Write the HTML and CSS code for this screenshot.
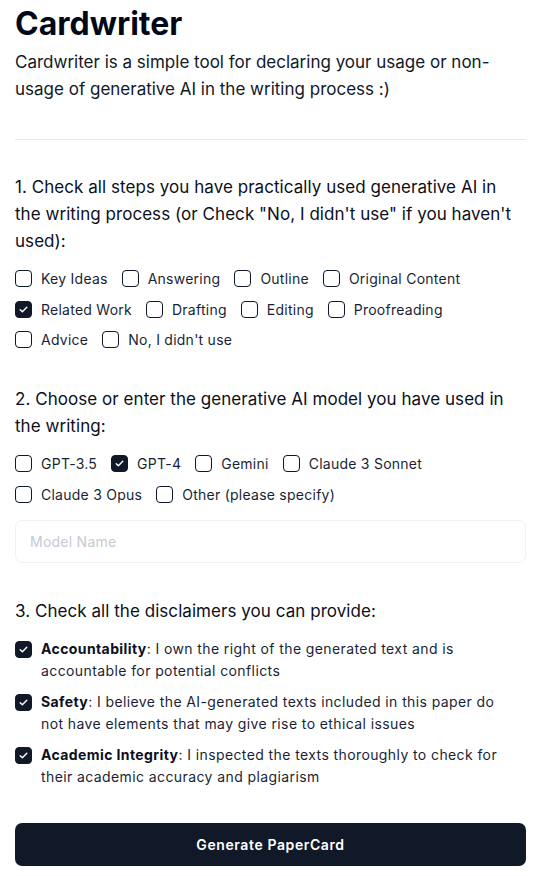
FILE: index.html
```html
<!DOCTYPE html>
<html lang="en">
<head>
<meta charset="utf-8">
<title>Cardwriter</title>
<link rel="stylesheet" href="styles.css">
</head>
<body>
<main class="page">
  <header class="intro">
    <h1 class="title">Cardwriter</h1>
    <p class="lead">Cardwriter is a simple tool for declaring your usage or non-usage of generative AI in the writing process :)</p>
  </header>
  <hr class="divider">

  <section class="section first">
    <h2 class="question">1. Check all steps you have practically used generative AI in the writing process (or Check "No, I didn't use" if you haven't used):</h2>
    <div class="options">
      <label class="opt"><span class="box"></span>Key Ideas</label>
      <label class="opt"><span class="box"></span>Answering</label>
      <label class="opt"><span class="box"></span>Outline</label>
      <label class="opt"><span class="box"></span>Original Content</label>
      <label class="opt"><span class="box checked"><svg viewBox="0 0 16 16"><path d="M4.5 8.2l2.3 2.3 4.7-4.9"/></svg></span>Related Work</label>
      <label class="opt"><span class="box"></span>Drafting</label>
      <label class="opt"><span class="box"></span>Editing</label>
      <label class="opt"><span class="box"></span>Proofreading</label>
      <label class="opt"><span class="box"></span>Advice</label>
      <label class="opt"><span class="box"></span>No, I didn't use</label>
    </div>
  </section>

  <section class="section">
    <h2 class="question">2. Choose or enter the generative AI model you have used in the writing:</h2>
    <div class="options">
      <label class="opt"><span class="box"></span>GPT-3.5</label>
      <label class="opt"><span class="box checked"><svg viewBox="0 0 16 16"><path d="M4.5 8.2l2.3 2.3 4.7-4.9"/></svg></span>GPT-4</label>
      <label class="opt"><span class="box"></span>Gemini</label>
      <label class="opt"><span class="box"></span>Claude 3 Sonnet</label>
      <label class="opt"><span class="box"></span>Claude 3 Opus</label>
      <label class="opt"><span class="box"></span>Other (please specify)</label>
    </div>
    <input class="field" type="text" placeholder="Model Name">
  </section>

  <section class="section last">
    <h2 class="question">3. Check all the disclaimers you can provide:</h2>
    <div class="disclaimers">
      <div class="disc"><span class="box checked"><svg viewBox="0 0 16 16"><path d="M4.5 8.2l2.3 2.3 4.7-4.9"/></svg></span><p><b>Accountability</b>: I own the right of the generated text and is accountable for potential conflicts</p></div>
      <div class="disc"><span class="box checked"><svg viewBox="0 0 16 16"><path d="M4.5 8.2l2.3 2.3 4.7-4.9"/></svg></span><p><b>Safety</b>: I believe the AI-generated texts included in this paper do not have elements that may give rise to ethical issues</p></div>
      <div class="disc"><span class="box checked"><svg viewBox="0 0 16 16"><path d="M4.5 8.2l2.3 2.3 4.7-4.9"/></svg></span><p><b>Academic Integrity</b>: I inspected the texts thoroughly to check for their academic accuracy and plagiarism</p></div>
    </div>
  </section>

  <button class="generate" type="button">Generate PaperCard</button>
</main>
</body>
</html>
```

FILE: styles.css
```css
* { box-sizing: border-box; }
html, body { margin: 0; padding: 0; background: #fff; }
body {
  font-family: Inter, "Noto Sans", sans-serif;
  color: #0f172a;
}
.page {
  padding: 6px 16px 10px 15px;
}
.title {
  margin: 0;
  font-size: 32px;
  line-height: 36px;
  font-weight: 700;
  color: #020817;
  letter-spacing: 0;
}
.lead {
  margin: 7px 0 0;
  font-size: 17px;
  line-height: 27px;
  font-weight: 400;
  color: #111827;
  letter-spacing: 0;
}
.divider {
  border: 0;
  border-top: 1px solid #e5e7eb;
  margin: 36px 0 0;
}
.section {
  margin-top: 38px;
}
.section.first {
  margin-top: 34px;
}
.section.last {
  margin-top: 35px;
}
.question {
  margin: 0;
  font-size: 17px;
  line-height: 27px;
  font-weight: 400;
  color: #0b1020;
  letter-spacing: 0.05px;
}
.options {
  margin-top: 15px;
  display: flex;
  flex-wrap: wrap;
  column-gap: 14px;
  row-gap: 13.5px;
}
.opt {
  display: flex;
  align-items: center;
  gap: 9px;
  font-size: 14px;
  line-height: 17px;
  color: #1a1f36;
  letter-spacing: 0.25px;
}
.box {
  flex: none;
  width: 17px;
  height: 17px;
  border: 1px solid #0f172a;
  border-radius: 4px;
  background: #fff;
  display: flex;
  align-items: center;
  justify-content: center;
}
.box.checked {
  background: #111827;
  border-color: #111827;
}
.box svg {
  width: 15px;
  height: 15px;
  fill: none;
  stroke: #fff;
  stroke-width: 1.5;
  stroke-linecap: round;
  stroke-linejoin: round;
}
.field {
  display: block;
  width: 100%;
  height: 43px;
  margin-top: 17px;
  padding: 0 14px;
  border: 1px solid #eef1f5;
  border-radius: 7px;
  font-family: inherit;
  font-size: 14px;
  letter-spacing: 0.25px;
  color: #0f172a;
  outline: none;
}
.field::placeholder { color: #c4cad3; }
.disclaimers {
  margin-top: 13px;
  display: flex;
  flex-direction: column;
  gap: 9px;
}
.disc {
  display: flex;
  align-items: flex-start;
  gap: 9px;
}
.disc .box { margin-top: 3px; }
.disc p {
  margin: 0;
  padding-right: 12px;
  font-size: 14px;
  line-height: 22px;
  color: #1a1f36;
  letter-spacing: 0.4px;
}
.disc b { font-weight: 700; color: #0b0f1e; }
.generate {
  display: block;
  width: 100%;
  height: 43px;
  margin-top: 35px;
  border: 0;
  border-radius: 7px;
  background: #111827;
  color: #fff;
  font-family: inherit;
  font-size: 14px;
  font-weight: 600;
  letter-spacing: 0.6px;
  cursor: pointer;
}
```
